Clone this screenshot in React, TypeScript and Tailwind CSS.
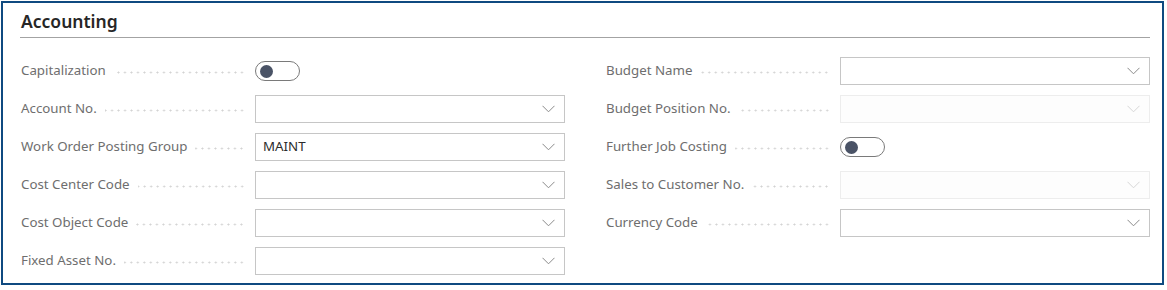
import React from 'react';

const font = { fontFamily: '"Segoe UI", "Noto Sans", "Open Sans", sans-serif' };

const Chevron = ({ disabled }: { disabled?: boolean }) => (
  <svg width="13" height="8" viewBox="0 0 13 8" fill="none">
    <path
      d="M0.5 0.8 L6.5 6.8 L12.5 0.8"
      stroke={disabled ? '#d6d6d6' : '#8a8a8a'}
      strokeWidth="1"
    />
  </svg>
);

const Label = ({ text }: { text: string }) => (
  <div className="flex items-center w-[234px] shrink-0 pr-[10px]">
    <span className="text-[13.3px] text-[#6e6e6e] whitespace-nowrap">{text}</span>
    <span className="flex-1 ml-[8px] mt-[2px] h-[3px] bg-[radial-gradient(circle,#d2d2d2_0.8px,transparent_1.2px)] bg-[length:6.5px_3px] bg-repeat-x bg-right" />
  </div>
);

const Toggle = () => (
  <div className="w-[45px] h-[20px] rounded-full border border-[#7a7a7a] flex items-center px-[4px] bg-white">
    <div className="w-[13px] h-[13px] rounded-full bg-[#4a5366]" />
  </div>
);

const Select = ({ value, disabled }: { value?: string; disabled?: boolean }) => (
  <div
    className={
      disabled
        ? 'flex-1 h-[28px] border border-[#ededed] bg-[#fdfdfd] flex items-center justify-between pl-[7px] pr-[9px]'
        : 'flex-1 h-[28px] border border-[#c6c6c6] bg-white flex items-center justify-between pl-[7px] pr-[9px]'
    }
  >
    <span className="text-[13.3px] text-[#2b2b2b]">{value}</span>
    <Chevron disabled={disabled} />
  </div>
);

type Field = { label: string; kind: 'toggle' | 'select'; value?: string; disabled?: boolean };

const left: Field[] = [
  { label: 'Capitalization', kind: 'toggle' },
  { label: 'Account No.', kind: 'select' },
  { label: 'Work Order Posting Group', kind: 'select', value: 'MAINT' },
  { label: 'Cost Center Code', kind: 'select' },
  { label: 'Cost Object Code', kind: 'select' },
  { label: 'Fixed Asset No.', kind: 'select' },
];

const right: Field[] = [
  { label: 'Budget Name', kind: 'select' },
  { label: 'Budget Position No.', kind: 'select', disabled: true },
  { label: 'Further Job Costing', kind: 'toggle' },
  { label: 'Sales to Customer No.', kind: 'select', disabled: true },
  { label: 'Currency Code', kind: 'select' },
];

const Column = ({ fields }: { fields: Field[] }) => (
  <div className="flex flex-col gap-[10px]">
    {fields.map((f) => (
      <div key={f.label} className="flex items-center h-[28px]">
        <Label text={f.label} />
        {f.kind === 'toggle' ? <Toggle /> : <Select value={f.value} disabled={f.disabled} />}
      </div>
    ))}
  </div>
);

const App = () => {
  return (
    <div className="bg-white w-[1167px] h-[290px] pt-[1px] pl-[1px] pr-[3px]" style={font}>
      <div className="h-[284px] border-2 border-[#0f4a80] pl-[17px] pr-[12px] pt-[7px]">
        <div className="border-b border-[#a3a3a3] pb-[5px]">
          <p className="text-[17.5px] font-semibold text-[#262626] leading-[22px] pl-[1px]">Accounting</p>
        </div>

        {/* fields */}
        <div className="grid grid-cols-2 gap-x-[41px] mt-[19px] pl-[1px]">
          <Column fields={left} />
          <Column fields={right} />
        </div>
      </div>
    </div>
  );
};

export default App;
